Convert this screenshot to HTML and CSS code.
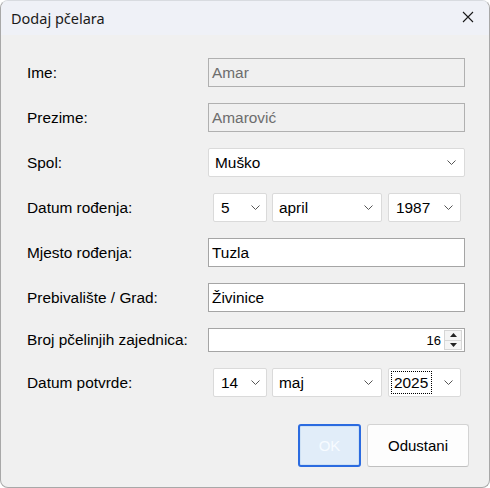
FILE: index.html
```
<!DOCTYPE html>
<html>
<head>
<meta charset="utf-8">
<link rel="stylesheet" href="styles.css">
</head>
<body>
<div class="window">
  <div class="titlebar">
    <span class="title">Dodaj pčelara</span>
    <svg class="close" width="12" height="12" viewBox="0 0 12 12"><path d="M1 1L11 11M11 1L1 11" stroke="#1a1a1a" stroke-width="1.1" fill="none"/></svg>
  </div>
  <div class="content">
    <div class="form">
      <label class="lbl">Ime:</label>
      <div class="input disabled">Amar</div>

      <label class="lbl">Prezime:</label>
      <div class="input disabled">Amarović</div>

      <label class="lbl">Spol:</label>
      <div class="combo full"><span>Muško</span><svg class="chev" width="9" height="5" viewBox="0 0 9 5"><path d="M0.5 0.5L4.5 4.5L8.5 0.5" stroke="#555" fill="none"/></svg></div>

      <label class="lbl">Datum rođenja:</label>
      <div class="daterow">
        <div class="combo day"><span>5</span><svg class="chev" width="9" height="5" viewBox="0 0 9 5"><path d="M0.5 0.5L4.5 4.5L8.5 0.5" stroke="#555" fill="none"/></svg></div>
        <div class="combo month"><span>april</span><svg class="chev" width="9" height="5" viewBox="0 0 9 5"><path d="M0.5 0.5L4.5 4.5L8.5 0.5" stroke="#555" fill="none"/></svg></div>
        <div class="combo year"><span>1987</span><svg class="chev" width="9" height="5" viewBox="0 0 9 5"><path d="M0.5 0.5L4.5 4.5L8.5 0.5" stroke="#555" fill="none"/></svg></div>
      </div>

      <label class="lbl">Mjesto rođenja:</label>
      <div class="input">Tuzla</div>

      <label class="lbl">Prebivalište / Grad:</label>
      <div class="input">Živinice</div>

      <label class="lbl">Broj pčelinjih zajednica:</label>
      <div class="spin">
        <span class="val">16</span>
        <div class="spinbtns">
          <div class="sbtn"><svg width="7" height="4" viewBox="0 0 7 4"><path d="M0 4L3.5 0L7 4Z" fill="#222"/></svg></div>
          <div class="sbtn"><svg width="7" height="4" viewBox="0 0 7 4"><path d="M0 0L3.5 4L7 0Z" fill="#222"/></svg></div>
        </div>
      </div>

      <label class="lbl">Datum potvrde:</label>
      <div class="daterow">
        <div class="combo day"><span>14</span><svg class="chev" width="9" height="5" viewBox="0 0 9 5"><path d="M0.5 0.5L4.5 4.5L8.5 0.5" stroke="#555" fill="none"/></svg></div>
        <div class="combo month"><span>maj</span><svg class="chev" width="9" height="5" viewBox="0 0 9 5"><path d="M0.5 0.5L4.5 4.5L8.5 0.5" stroke="#555" fill="none"/></svg></div>
        <div class="combo year focus"><span class="focused">2025</span><svg class="chev" width="9" height="5" viewBox="0 0 9 5"><path d="M0.5 0.5L4.5 4.5L8.5 0.5" stroke="#555" fill="none"/></svg></div>
      </div>
    </div>
    <div class="buttons">
      <div class="btn ok">OK</div>
      <div class="btn cancel">Odustani</div>
    </div>
  </div>
</div>
</body>
</html>
```
FILE: styles.css
```
html, body {
  margin: 0;
  padding: 0;
  background: #ffffff;
}
.window {
  width: 490px;
  height: 488px;
  box-sizing: border-box;
  border: 1px solid #a8a8a8;
  border-top-color: #d8dbe0;
  border-radius: 8px;
  overflow: hidden;
  background: #f0f0f0;
  display: flex;
  flex-direction: column;
  font-family: "Liberation Sans", Arial, sans-serif;
  font-size: 15.4px;
  color: #000;
}
.titlebar {
  height: 34px;
  background: #eff1f7;
  display: flex;
  align-items: center;
  justify-content: space-between;
  padding: 0 15px 0 10px;
  flex: none;
}
.title {
  font-family: "Noto Sans", "Open Sans", sans-serif;
  font-size: 14.5px;
  color: #1a1a1a;
  margin-top: -1px;
}
.close {
  margin-top: -2px;
}
.content {
  padding: 23px 20px 0 25px;
  display: flex;
  flex-direction: column;
}
.form {
  display: grid;
  grid-template-columns: 182px 257px;
  row-gap: 16px;
  align-items: center;
}
.lbl {
  padding-left: 1px;
}
.input {
  height: 29px;
  box-sizing: border-box;
  border: 1px solid #a5a5a5;
  background: #fff;
  padding: 0 3px;
  display: flex;
  align-items: center;
}
.input.disabled {
  background: #f0f0f0;
  color: #6d6d6d;
  border-color: #b0b0b0;
}
.combo {
  height: 29px;
  box-sizing: border-box;
  border: 1px solid #dadada;
  border-radius: 2px;
  background: #fff;
  display: flex;
  align-items: center;
  justify-content: space-between;
  padding: 0 8px 0 6px;
}
.daterow {
  display: flex;
  gap: 5px;
  padding-left: 5px;
}
.combo.day {
  width: 54px;
  padding-left: 7px;
  padding-right: 6px;
}
.combo.month {
  width: 110px;
}
.combo.year {
  width: 73px;
  margin-left: 1px;
  padding-left: 7px;
  padding-right: 7px;
}
.combo.year.focus {
  padding-left: 3px;
}
.focused {
  outline: 1px dotted #000;
  padding: 0 3px 0 2px;
  line-height: 21px;
}
.spin {
  height: 24px;
  box-sizing: border-box;
  border: 1px solid #a5a5a5;
  background: #fff;
  display: flex;
  align-items: center;
  justify-content: flex-end;
  padding-right: 2px;
  gap: 3px;
}
.val {
  font-size: 13px;
}
.spinbtns {
  width: 18px;
  height: 20px;
  display: flex;
  flex-direction: column;
  border: 1px solid #d6d6d6;
  box-sizing: border-box;
  background: #f4f4f4;
}
.sbtn {
  flex: 1;
  display: flex;
  align-items: center;
  justify-content: center;
}
.sbtn + .sbtn {
  border-top: 1px solid #d6d6d6;
}
.buttons {
  display: flex;
  justify-content: flex-end;
  gap: 6px;
  margin-top: 27px;
}
.btn {
  height: 43px;
  box-sizing: border-box;
  border-radius: 3px;
  display: flex;
  align-items: center;
  justify-content: center;
  font-size: 15px;
}
.ok {
  width: 63px;
  border: 2px solid #2b6be0;
  background: #e1edf9;
  color: #f7fbff;
  box-shadow: inset 0 0 0 1px #cfe2f5;
}
.cancel {
  width: 102px;
  border: 1px solid #d3d3d3;
  border-bottom-color: #c0c0c0;
  background: #fdfdfd;
}
```
